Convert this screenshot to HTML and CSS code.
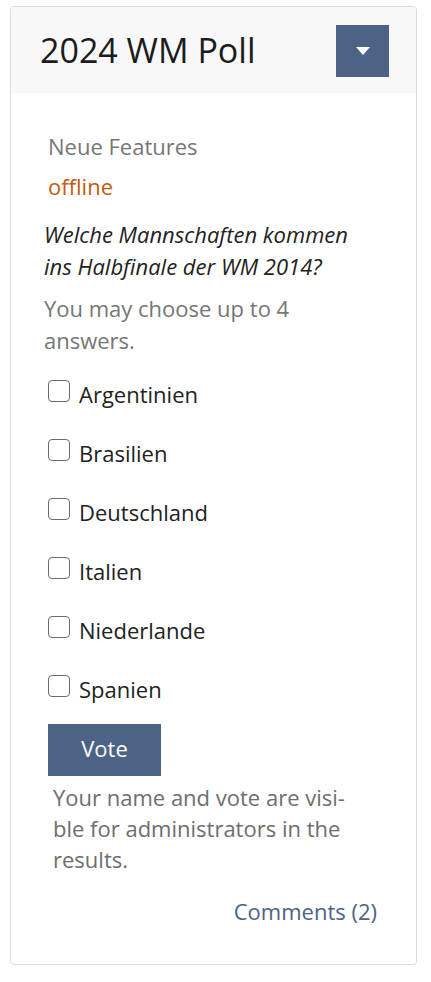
FILE: index.html
```html
<!DOCTYPE html>
<html lang="de">
<head>
<meta charset="utf-8">
<title>2024 WM Poll</title>
<link rel="stylesheet" href="styles.css">
</head>
<body>
<div class="card">
  <div class="card-header">
    <h2 class="title">2024 WM Poll</h2>
    <button class="toggle" type="button" aria-label="Menu">
      <svg width="14" height="8" viewBox="0 0 14 8"><path d="M0 0h14L7 8z" fill="#fff"/></svg>
    </button>
  </div>
  <div class="card-body">
    <div class="category">Neue Features</div>
    <div class="status">offline</div>
    <p class="question">Welche Mannschaften kommen ins Halbfinale der WM 2014?</p>
    <p class="hint">You may choose up to 4 answers.</p>
    <ul class="options">
      <li><label><span class="box"></span>Argentinien</label></li>
      <li><label><span class="box"></span>Brasilien</label></li>
      <li><label><span class="box"></span>Deutschland</label></li>
      <li><label><span class="box"></span>Italien</label></li>
      <li><label><span class="box"></span>Niederlande</label></li>
      <li><label><span class="box"></span>Spanien</label></li>
    </ul>
    <button class="vote" type="button">Vote</button>
    <p class="notice">Your name and vote are visi-<br>ble for administrators in the results.</p>
    <div class="comments"><a href="#">Comments (2)</a></div>
  </div>
</div>
</body>
</html>
```
FILE: styles.css
```css
html, body {
  margin: 0;
  padding: 0;
  background: #fff;
}
body {
  padding: 6px 0 0 10px;
  font-family: "Open Sans", "Noto Sans", sans-serif;
  color: #222;
}
.card {
  width: 405px;
  height: 957px;
  border: 1px solid #dcdcdc;
  border-radius: 4px;
  box-sizing: content-box;
  overflow: hidden;
}
.card-header {
  background: #f8f8f8;
  height: 86px;
  display: flex;
  align-items: center;
  justify-content: space-between;
  padding: 0 27px 0 29px;
}
.title {
  margin: 0 0 1px;
  font-size: 34px;
  font-weight: 400;
  color: #1c1c1c;
  line-height: 1;
}
.toggle {
  width: 53px;
  height: 52px;
  border: 0;
  background: #4c6385;
  display: flex;
  align-items: center;
  justify-content: center;
  padding: 0;
  margin-top: 1px;
}
.card-body {
  padding: 37px 37px 0 33px;
  font-size: 22px;
  line-height: 32px;
}
.category {
  color: #767676;
  padding-left: 4px;
}
.status {
  color: #c55a11;
  padding-left: 4px;
  margin-top: 8px;
}
.question {
  font-style: italic;
  margin: 16px 0 0;
  color: #222;
}
.hint {
  color: #767676;
  margin: 10px 0 0;
}
.options {
  list-style: none;
  margin: 22px 0 0;
  padding: 0 0 0 4px;
  display: flex;
  flex-direction: column;
  gap: 27px;
}
.options label {
  display: flex;
  align-items: flex-start;
  color: #222;
}
.box {
  box-sizing: border-box;
  width: 22px;
  height: 22px;
  border: 1.5px solid #6b6b6b;
  border-radius: 4px;
  margin: 1.5px 9px 0 0;
  flex: none;
}
.vote {
  display: block;
  margin: 19px 0 0 4px;
  width: 113px;
  height: 52px;
  border: 0;
  background: #4c6385;
  color: #fff;
  font: inherit;
  font-size: 22px;
  padding: 0 0 4px;
}
.notice {
  color: #6e6e6e;
  margin: 6px 0 0 9px;
  line-height: 31px;
}
.comments {
  text-align: right;
  margin-top: 20px;
  padding-right: 2px;
}
.comments a {
  color: #4c6385;
  text-decoration: none;
}
```
